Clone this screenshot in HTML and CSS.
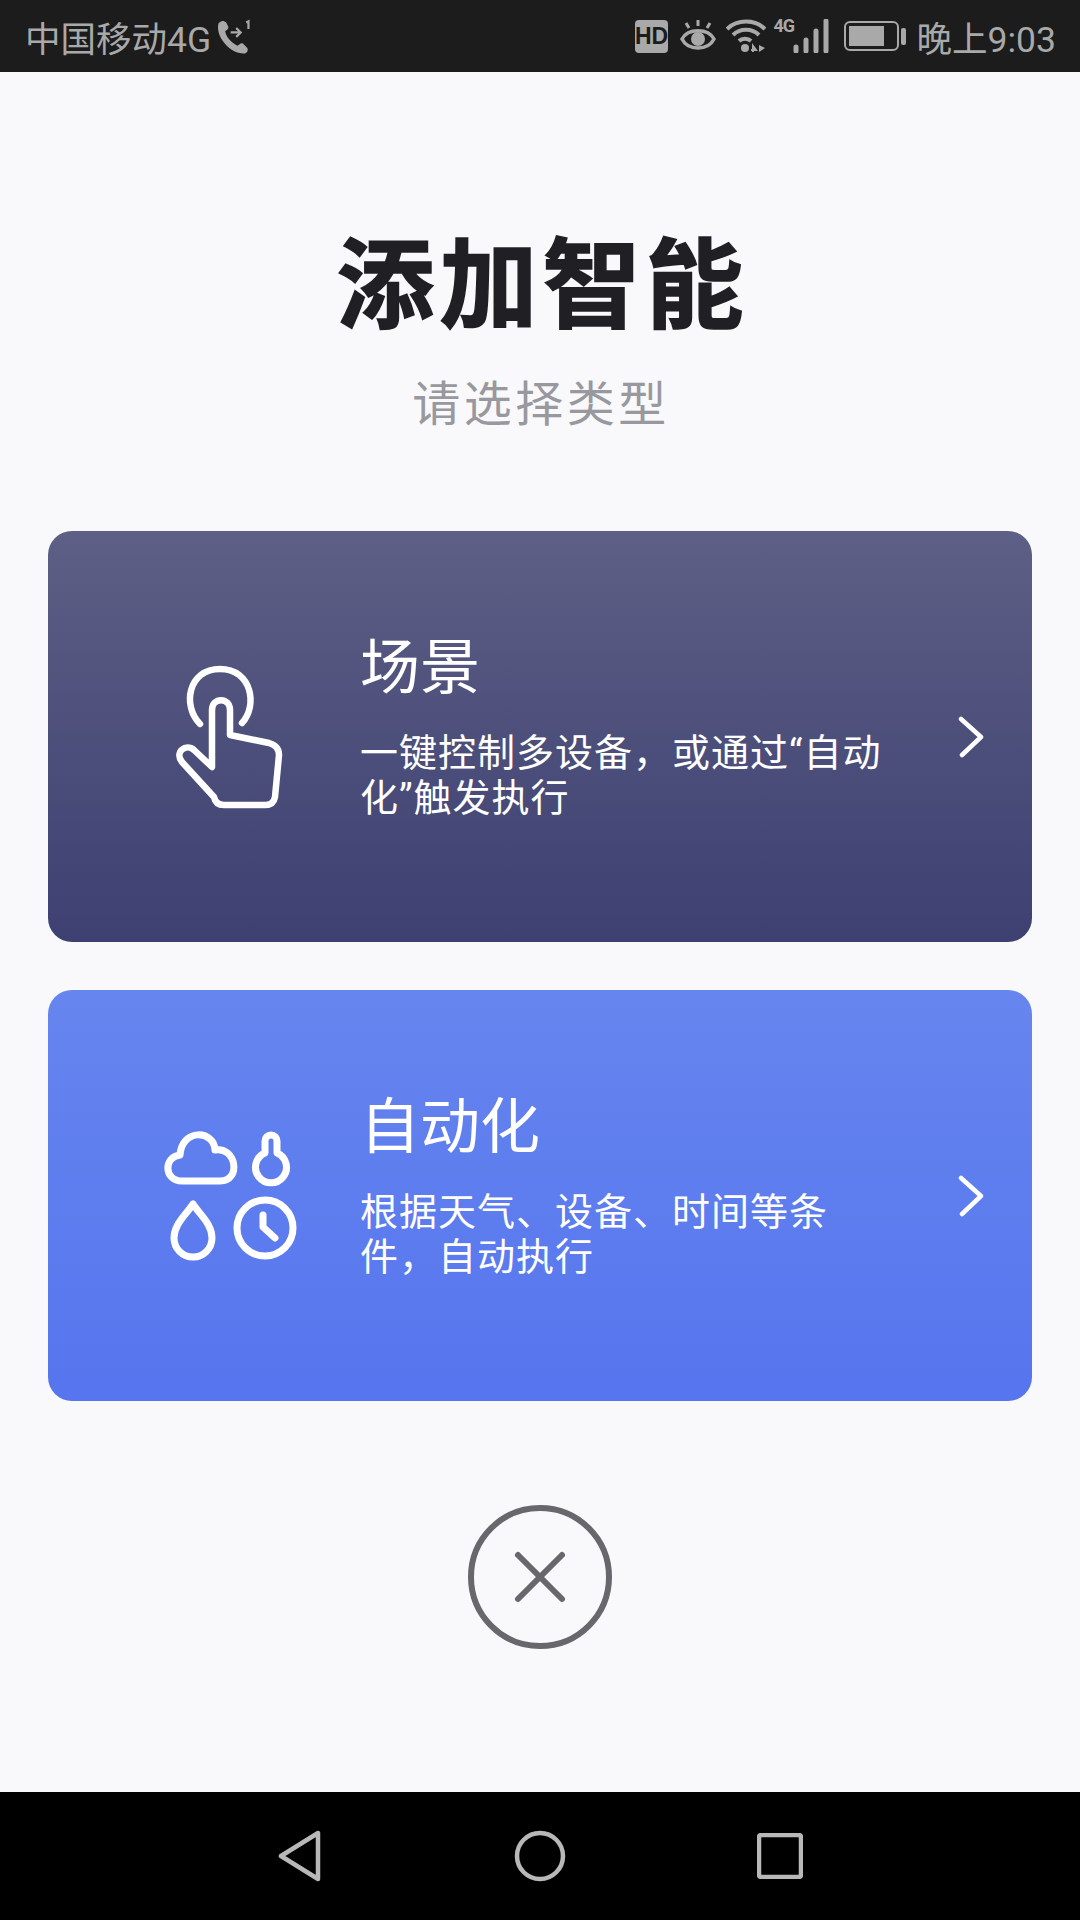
FILE: index.html
```html
<!DOCTYPE html>
<html lang="zh-CN">

<head>
    <meta charset="UTF-8">
    <meta name="viewport" content="width=device-width, initial-scale=1.0">
    <title>添加智能</title>
    <link rel="stylesheet" href="styles.css">
</head>

<body>
    <div class="phone">
        <div class="status-bar">
            <div class="status-left">
                <span>中国移动4G</span>
                <svg class="call-icon" width="40" height="40" viewBox="0 0 36 36">
                    <path d="M4 5 C6 2 9 2 11 4 L13 8 C13 10 11 11 10 12 C11 17 15 22 21 25 C23 24 24 22 26 23 L30 27 C31 29 30 31 28 32 C15 33 1 17 4 5 Z" fill="#a9a9a9" />
                    <path d="M15 13 H24 M20 9 L24 13 L20 17" fill="none" stroke="#a9a9a9" stroke-width="2" />
                    <path d="M29 4 L31 3 V10" fill="none" stroke="#a9a9a9" stroke-width="2" />
                </svg>
            </div>
            <div class="status-right">
                <svg width="33" height="33" viewBox="0 0 33 33">
                    <rect width="33" height="33" rx="4" fill="#a9a9a9" />
                    <text x="16.5" y="24" class="hd-text">HD</text>
                </svg>
                <svg class="eye-icon" width="36" height="34" viewBox="0 0 36 34">
                    <path d="M2 20 C8 9 28 9 34 20 C28 32 8 32 2 20 Z" fill="none" stroke="#a9a9a9" stroke-width="3.5" />
                    <circle cx="18" cy="20" r="7" fill="#a9a9a9" />
                    <path d="M18 1 V7 M6 4 L9 9 M30 4 L27 9" stroke="#a9a9a9" stroke-width="3" fill="none" />
                </svg>
                <svg class="wifi-icon" width="40" height="34" viewBox="0 0 40 34">
                    <path d="M1 10 C11 0 29 0 39 10 M7 16 C14 9 26 9 33 16 M13 22 C16 19 22 19 25 22" fill="none" stroke="#a9a9a9" stroke-width="4" />
                    <circle cx="19" cy="29" r="4" fill="#a9a9a9" />
                    <path d="M27 33 V27 L30 31 H25" fill="none" stroke="#a9a9a9" stroke-width="2" />
                    <path d="M33 26 V33 L39 29 Z" fill="#a9a9a9" />
                </svg>
                <div class="signal">
                    <span class="net-label">4G</span>
                    <svg width="36" height="34" viewBox="0 0 36 34">
                        <path d="M3 28 V32 M13 21 V32 M23 12 V32 M33 2 V32" stroke="#a9a9a9" stroke-width="5" stroke-linecap="round" fill="none" />
                    </svg>
                </div>
                <svg class="battery-icon" width="62" height="32" viewBox="0 0 62 32">
                    <rect x="1" y="2" width="53" height="28" rx="5" fill="none" stroke="#a9a9a9" stroke-width="2" />
                    <rect x="5" y="6" width="35" height="20" fill="#a9a9a9" />
                    <rect x="57" y="8" width="5" height="17" rx="2" fill="#a9a9a9" />
                </svg>
                <span class="time">晚上9:03</span>
            </div>
        </div>

        <div class="content">
            <h1>添加智能</h1>
            <p class="subtitle">请选择类型</p>

            <div class="card card-scene">
                <svg class="card-icon icon-hand" width="160" height="180" viewBox="0 0 160 180">
                    <path d="M50 84 C32 66 38 29 70 29 C102 29 108 66 92 83" />
                    <path d="M62 127 V70 C62 57 80 57 80 70 V95 L119 103 C126 105 129 109 129 115 L125 157 C124 163 120 165 115 165 H74 C68 165 65 162 64 157 L32 122 C24 112 36 103 44 110 Z" />
                </svg>
                <div class="card-text">
                    <h2>场景</h2>
                    <p>一键控制多设备，或通过“自动<br>化”触发执行</p>
                </div>
                <svg class="chevron" width="28" height="42" viewBox="0 0 28 42">
                    <path d="M3 3 L23 21 L4 39" />
                </svg>
            </div>

            <div class="card card-auto">
                <svg class="card-icon icon-weather" width="160" height="160" viewBox="0 0 160 160">
                    <path d="M32 71 C14 71 13 47 30 45 C32 18 64 20 65 40 C86 36 92 71 70 71 Z" />
                    <path d="M115 43 V31 A6 6 0 0 1 127 31 V43 A15.5 15.5 0 1 1 115 43 Z" />
                    <path d="M43 94 C36 105 24 114 24 128 A19 19 0 0 0 62 128 C62 114 50 105 43 94 Z" />
                    <circle cx="115" cy="118" r="28" />
                    <path d="M113 105 V117 L125 128" />
                </svg>
                <div class="card-text">
                    <h2>自动化</h2>
                    <p>根据天气、设备、时间等条<br>件，自动执行</p>
                </div>
                <svg class="chevron" width="28" height="42" viewBox="0 0 28 42">
                    <path d="M3 3 L23 21 L4 39" />
                </svg>
            </div>

            <div class="close-wrap">
                <svg width="150" height="150" viewBox="0 0 150 150">
                    <circle cx="75" cy="75" r="69" fill="none" stroke="#68686c" stroke-width="6" />
                    <path d="M53 53 L97 97 M97 53 L53 97" stroke="#68686c" stroke-width="6" stroke-linecap="round" fill="none" />
                </svg>
            </div>
        </div>

        <div class="nav-bar">
            <svg width="46" height="52" viewBox="0 0 46 52">
                <path d="M41 3 V49 L4 26 Z" />
            </svg>
            <svg width="52" height="52" viewBox="0 0 52 52">
                <circle cx="26" cy="26" r="23" />
            </svg>
            <svg width="46" height="46" viewBox="0 0 46 46">
                <rect x="2" y="2" width="42" height="42" rx="2" />
            </svg>
        </div>
    </div>
</body>

</html>
```

FILE: styles.css
```css
body {
    font-family: "Noto Sans CJK SC", "Noto Sans", sans-serif;
    background-color: #f9f9fb;
    margin: 0;
    padding: 0;
}

.phone {
    width: 1080px;
    height: 1920px;
    display: flex;
    flex-direction: column;
    overflow: hidden;
}

/* status bar */
.status-bar {
    height: 72px;
    flex: none;
    background-color: #1c1c1c;
    color: #a9a9a9;
    display: flex;
    justify-content: space-between;
    align-items: center;
    padding: 0 24px 0 25px;
    font-family: Roboto, "Noto Sans CJK SC", sans-serif;
    font-size: 35.5px;
}

.status-left,
.status-right {
    display: flex;
    align-items: center;
}

.call-icon {
    margin: 4px 0 0 3px;
}

.eye-icon {
    margin-left: 12px;
}

.wifi-icon {
    margin-left: 10px;
}

.signal {
    position: relative;
    margin-left: 27px;
    display: flex;
}

.net-label {
    position: absolute;
    left: -19px;
    top: -3px;
    font-size: 18px;
    font-weight: 700;
    line-height: 20px;
    letter-spacing: -1px;
}

.battery-icon {
    margin-left: 15px;
}

.time {
    margin-left: 11px;
}

.hd-text {
    font-family: "Liberation Sans", sans-serif;
    font-size: 23px;
    font-weight: 700;
    fill: #1c1c1c;
    text-anchor: middle;
}

/* main part */
.content {
    flex: 1;
    padding: 0 48px;
}

h1 {
    margin: 145px 0 0;
    padding-left: 5px;
    color: #1f1f24;
    text-align: center;
    font-size: 98px;
    font-weight: 700;
    line-height: 120px;
    letter-spacing: 5px;
    -webkit-text-stroke: 1.5px #1f1f24;
}

.subtitle {
    margin: 30px 0 98px;
    padding-left: 2px;
    color: #98989e;
    text-align: center;
    font-size: 48px;
    line-height: 66px;
    letter-spacing: 3.5px;
}

.card {
    height: 411px;
    border-radius: 24px;
    display: flex;
    align-items: flex-start;
    margin-bottom: 48px;
    color: #fff;
    padding-left: 102px;
    box-sizing: border-box;
}

.card-scene {
    background: linear-gradient(#5d5f85, #3d4071);
}

.card-auto {
    background: linear-gradient(#6685ee, #5675ee);
}

.card-icon {
    flex: none;
    fill: none;
    stroke: #fff;
    stroke-width: 6.5;
    stroke-linecap: round;
    stroke-linejoin: round;
}

.icon-hand {
    margin-top: 109px;
}

.icon-weather {
    margin-top: 120px;
    stroke-width: 7;
}

.card-text {
    width: 540px;
    margin: 96px 0 0 50px;
}

.card-text h2 {
    margin: 0 0 32px;
    font-size: 60px;
    font-weight: 400;
    line-height: 72px;
}

.card-text p {
    margin: 0;
    font-family: Roboto, "Noto Sans CJK SC", sans-serif;
    font-size: 38px;
    line-height: 45px;
    letter-spacing: 1px;
}

.chevron {
    flex: none;
    align-self: center;
    margin-left: 58px;
    fill: none;
    stroke: #fff;
    stroke-width: 4.5;
    stroke-linecap: round;
    stroke-linejoin: round;
}

.close-wrap {
    display: flex;
    justify-content: center;
    margin-top: 101px;
}

/* bottom nav */
.nav-bar {
    height: 128px;
    flex: none;
    background-color: #000;
    display: flex;
    align-items: center;
    justify-content: center;
    gap: 191px;
}

.nav-bar svg {
    fill: none;
    stroke: #b8b8b8;
    stroke-width: 4.5;
    stroke-linejoin: round;
}
```
